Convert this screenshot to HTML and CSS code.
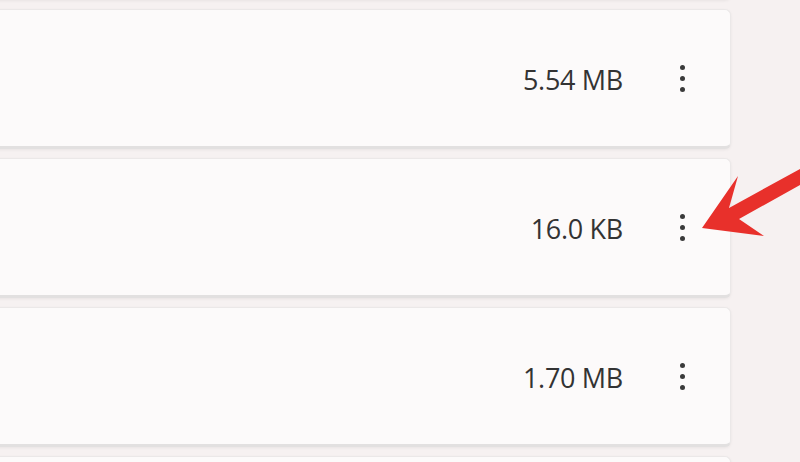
FILE: index.html
```html
<!DOCTYPE html>
<html>
<head>
<meta charset="utf-8">
<link rel="stylesheet" href="styles.css">
</head>
<body>
<div class="page">
  <div class="list">
    <div class="card"></div>
    <div class="card"><span class="size">5.54 MB</span><button class="more" aria-label="More options"><span></span><span></span><span></span></button></div>
    <div class="card"><span class="size">16.0 KB</span><button class="more" aria-label="More options"><span></span><span></span><span></span></button></div>
    <div class="card"><span class="size">1.70 MB</span><button class="more" aria-label="More options"><span></span><span></span><span></span></button></div>
    <div class="card"></div>
  </div>
  <svg class="arrow" width="100" height="80" viewBox="700 165 100 80" aria-hidden="true">
    <polygon points="702,228 738,176 729,208 800,169 800,185 739,219 764,236" fill="#e8302b"/>
  </svg>
</div>
</body>
</html>
```

FILE: styles.css
```css
html, body {
  margin: 0;
  padding: 0;
}
body {
  background: #f6f1f1;
  font-family: "Open Sans", "Noto Sans", sans-serif;
  overflow: hidden;
}
.page {
  position: relative;
  width: 800px;
  height: 462px;
  overflow: hidden;
}
.list {
  display: flex;
  flex-direction: column;
  gap: 9px;
  width: 741px;
  margin-left: -10px;
  margin-top: -140px;
}
.card {
  height: 136px;
  flex: none;
  display: flex;
  align-items: center;
  justify-content: flex-end;
  gap: 44px;
  padding-right: 33px;
  background: #fcfafa;
  border: 1px solid #ebe8e8;
  border-bottom: 3px solid #e2e0e0;
  border-radius: 6px;
  box-shadow: 0 1px 3px rgba(0,0,0,0.06);
}
.size {
  font-size: 27px;
  color: #333;
  letter-spacing: -0.3px;
  line-height: 1;
  margin-top: 2px;
}
.more {
  width: 30px;
  height: 34px;
  padding: 0;
  border: 0;
  background: transparent;
  display: flex;
  flex-direction: column;
  align-items: center;
  justify-content: center;
  gap: 6px;
}
.more span {
  width: 5px;
  height: 5px;
  border-radius: 50%;
  background: #3a3a3a;
}
.arrow {
  position: absolute;
  left: 700px;
  top: 165px;
}
```
